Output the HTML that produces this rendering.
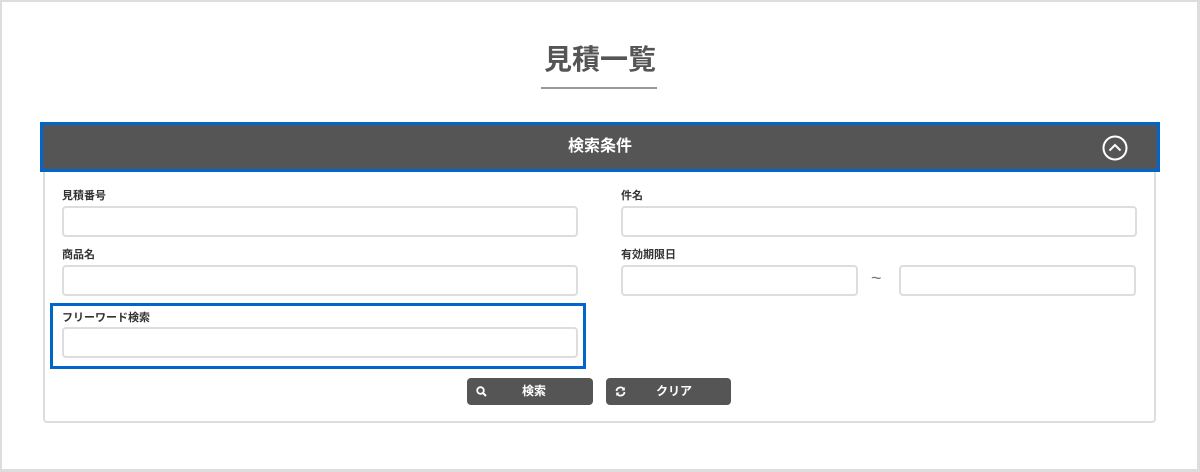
<!DOCTYPE html>
<html><head><meta charset="utf-8"><style>
*{box-sizing:border-box;margin:0;padding:0}
body{width:1200px;height:472px;background:#fff;font-family:"Liberation Sans","Noto Sans CJK JP",sans-serif;position:relative;overflow:hidden}
.frame{position:absolute;left:0;top:0;width:1200px;height:472px;border:2px solid #ddd;border-right-width:3px;border-bottom-width:3px}
.abs{position:absolute}
.title{left:0;width:1200px;top:40px;text-align:center;font-size:28px;font-weight:bold;color:#555;line-height:40px}
.ul{left:541px;top:87px;width:116px;height:2px;background:#999}
.panel{left:43px;top:168px;width:1113px;height:255px;border:2px solid #ddd;border-top:none;border-radius:0 0 4px 4px}
.bar{left:40px;top:122px;width:1120px;height:50px;border:3px solid #0066cc;background:#555;color:#fff;font-size:16px;font-weight:bold;text-align:center;line-height:44px}
.lbl{font-size:11px;font-weight:bold;color:#333;line-height:14px}
.in{border:2px solid #ddd;border-radius:4px;background:#fff;height:31px}
.btn{background:#555;border-radius:4px;height:27px;color:#fff;font-size:12px;font-weight:bold;line-height:27px}
</style></head><body>
<div class="frame"></div>
<div class="abs title">見積一覧</div>
<div class="abs ul"></div>
<div class="abs panel"></div>
<div class="abs bar">検索条件
<svg class="abs" style="left:1058px;top:9px" width="28" height="28" viewBox="0 0 28 28"><circle cx="14" cy="14" r="11.5" fill="none" stroke="#fff" stroke-width="2"/><path d="M8.5 16.5 L14 11 L19.5 16.5" fill="none" stroke="#fff" stroke-width="2"/></svg></div>
<div class="abs lbl" style="left:62px;top:189px">見積番号</div>
<div class="abs in" style="left:62px;top:206px;width:516px"></div>
<div class="abs lbl" style="left:621px;top:189px">件名</div>
<div class="abs in" style="left:621px;top:206px;width:516px"></div>
<div class="abs lbl" style="left:62px;top:248px">商品名</div>
<div class="abs in" style="left:62px;top:265px;width:516px"></div>
<div class="abs lbl" style="left:621px;top:248px">有効期限日</div>
<div class="abs in" style="left:621px;top:265px;width:237px"></div>
<div class="abs" style="left:871px;top:268px;font-size:18px;color:#777">~</div>
<div class="abs in" style="left:899px;top:265px;width:237px"></div>
<div class="abs" style="left:50px;top:303px;width:536px;height:66px;border:3px solid #0066cc"></div>
<div class="abs lbl" style="left:62px;top:311px">フリーワード検索</div>
<div class="abs in" style="left:62px;top:327px;width:516px"></div>
<div class="abs btn" style="left:467px;top:378px;width:126px">
<svg class="abs" style="left:9px;top:8px" width="11" height="11" viewBox="0 0 11 11"><circle cx="4.5" cy="4.5" r="3.3" fill="none" stroke="#fff" stroke-width="1.8"/><path d="M7 7 L10 10" stroke="#fff" stroke-width="2"/></svg>
<span class="abs" style="left:55px">検索</span></div>
<div class="abs btn" style="left:606px;top:378px;width:125px">
<svg class="abs" style="left:9px;top:8px" width="11" height="11" viewBox="0 0 11 11"><path d="M1.5 5 A4 4 0 0 1 9 3.5 M9.5 6 A4 4 0 0 1 2 7.5" fill="none" stroke="#fff" stroke-width="1.8"/><path d="M9.8 1 L9.8 4.5 L6.5 4.5Z M1.2 10 L1.2 6.5 L4.5 6.5Z" fill="#fff"/></svg>
<span class="abs" style="left:50px">クリア</span></div>
</body></html>
